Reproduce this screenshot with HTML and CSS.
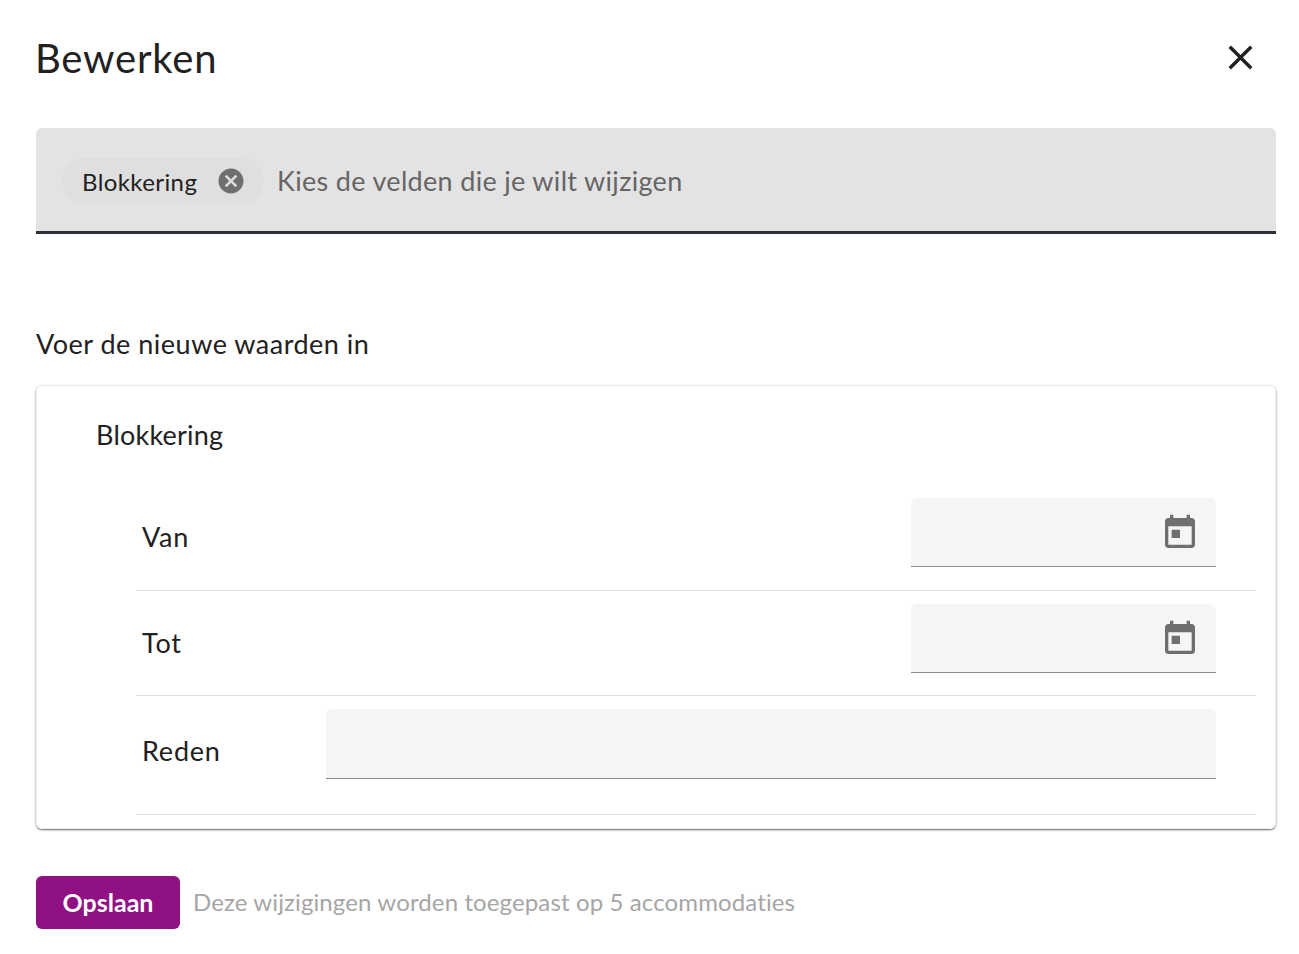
FILE: index.html
```html
<!DOCTYPE html>
<html lang="nl">
  <head>
    <meta charset="UTF-8" />
    <title>Bewerken</title>
    <link rel="stylesheet" href="styles.css">
  </head>
  <body>
    <div class="dialog">
      <div class="header">
        <h1>Bewerken</h1>
        <svg class="close" viewBox="0 0 24 24" width="41" height="41"><path d="M19 6.41 17.59 5 12 10.59 6.41 5 5 6.41 10.59 12 5 17.59 6.41 19 12 13.41 17.59 19 19 17.59 13.41 12z"/></svg>
      </div>

      <div class="field-select">
        <span class="chip">
          <span class="chip-label">Blokkering</span>
          <svg viewBox="0 0 24 24" width="30" height="30"><path d="M12 2C6.47 2 2 6.47 2 12s4.47 10 10 10 10-4.47 10-10S17.53 2 12 2zm5 13.59L15.59 17 12 13.41 8.41 17 7 15.59 10.59 12 7 8.41 8.41 7 12 10.59 15.59 7 17 8.41 13.41 12 17 15.59z"/></svg>
        </span>
        <span class="placeholder">Kies de velden die je wilt wijzigen</span>
      </div>

      <p class="subtitle">Voer de nieuwe waarden in</p>

      <div class="card">
        <h2>Blokkering</h2>
        <div class="row row-first">
          <label>Van</label>
          <div class="input date">
            <svg viewBox="0 0 24 24" width="40" height="40"><path d="M7 10h5v5H7zM16 1v2H8V1H6v2H5c-1.11 0-1.99.9-1.99 2L3 19c0 1.1.89 2 2 2h14c1.1 0 2-.9 2-2V5c0-1.1-.9-2-2-2h-1V1h-2zm3 18H5V8h14v11z"/></svg>
          </div>
        </div>
        <div class="row">
          <label>Tot</label>
          <div class="input date">
            <svg viewBox="0 0 24 24" width="40" height="40"><path d="M7 10h5v5H7zM16 1v2H8V1H6v2H5c-1.11 0-1.99.9-1.99 2L3 19c0 1.1.89 2 2 2h14c1.1 0 2-.9 2-2V5c0-1.1-.9-2-2-2h-1V1h-2zm3 18H5V8h14v11z"/></svg>
          </div>
        </div>
        <div class="row row-wide">
          <label>Reden</label>
          <div class="input wide"></div>
        </div>
      </div>

      <div class="footer">
        <button class="save-btn">Opslaan</button>
        <span class="hint">Deze wijzigingen worden toegepast op 5 accommodaties</span>
      </div>
    </div>
  </body>
</html>
```

FILE: styles.css
```css
* {
  box-sizing: border-box;
}

body {
  margin: 0;
  background: white;
  color: #212121;
  font-family: "Lato", "Noto Sans", sans-serif;
}

.dialog {
  padding: 0 23px 0 36px;
}

.header {
  height: 128px;
  display: flex;
  justify-content: space-between;
  align-items: flex-start;
  padding-top: 34px;
}

h1 {
  margin: 0 0 0 -1px;
  font-size: 40px;
  line-height: 48px;
  font-weight: 400;
  letter-spacing: 0.8px;
}

.close {
  margin: 3px 15px 0 0;
  fill: #212121;
}

.field-select {
  height: 106px;
  display: flex;
  align-items: center;
  padding: 2px 26px 0;
  background: #e3e3e3;
  border-bottom: 3px solid #2f2f3b;
  border-radius: 6px 6px 0 0;
}

.chip {
  width: 202px;
  height: 46px;
  margin-right: 13px;
  padding-left: 20px;
  display: flex;
  align-items: center;
  gap: 19px;
  background: #dfdfdf;
  border-radius: 23px;
  font-size: 24px;
  letter-spacing: 0.4px;
}

.chip-label {
  padding-top: 1px;
}

.chip svg {
  fill: #6f6f6f;
}

.placeholder {
  padding-bottom: 1px;
  font-size: 27px;
  color: #666;
  letter-spacing: 0.32px;
}

.subtitle {
  margin: 93px 0 24px;
  font-size: 27px;
  line-height: 34px;
  letter-spacing: 0.5px;
}

.card {
  height: 444px;
  padding: 0 19px 14px 99px;
  border: 1px solid #ececec;
  border-radius: 6px;
  box-shadow: 0 1px 2px rgba(0, 0, 0, 0.6);
}

h2 {
  margin: 0 0 0 -40px;
  height: 99px;
  padding-top: 32px;
  font-size: 27px;
  line-height: 34px;
  font-weight: 400;
  letter-spacing: 0.2px;
}

.row {
  height: 105px;
  padding: 13px 40px 0 6px;
  display: flex;
  justify-content: space-between;
  border-bottom: 1px solid #e0e0e0;
  font-size: 27px;
}

.row-first {
  height: 106px;
}

.row label {
  line-height: 78px;
  letter-spacing: 0.8px;
}

.row-wide {
  height: 119px;
}

.row-wide label {
  line-height: 84px;
}

.input {
  height: 69px;
  background: #f5f5f5;
  border-bottom: 1px solid #8c8c8c;
  border-radius: 6px 6px 0 0;
}

.date {
  width: 305px;
  display: flex;
  justify-content: flex-end;
  padding: 15px 16px 0 0;
}

.date svg {
  fill: #6f6f6f;
}

.wide {
  width: 890px;
  height: 70px;
}

.footer {
  display: flex;
  align-items: center;
  gap: 13px;
  margin-top: 47px;
}

.save-btn {
  width: 144px;
  height: 53px;
  padding-bottom: 3px;
  border: none;
  border-radius: 6px;
  background: #8f1184;
  color: white;
  font-family: inherit;
  font-size: 25px;
  font-weight: 700;
}

.hint {
  padding-bottom: 2px;
  font-size: 24px;
  color: #a6a6a6;
  letter-spacing: 0.12px;
}
```
